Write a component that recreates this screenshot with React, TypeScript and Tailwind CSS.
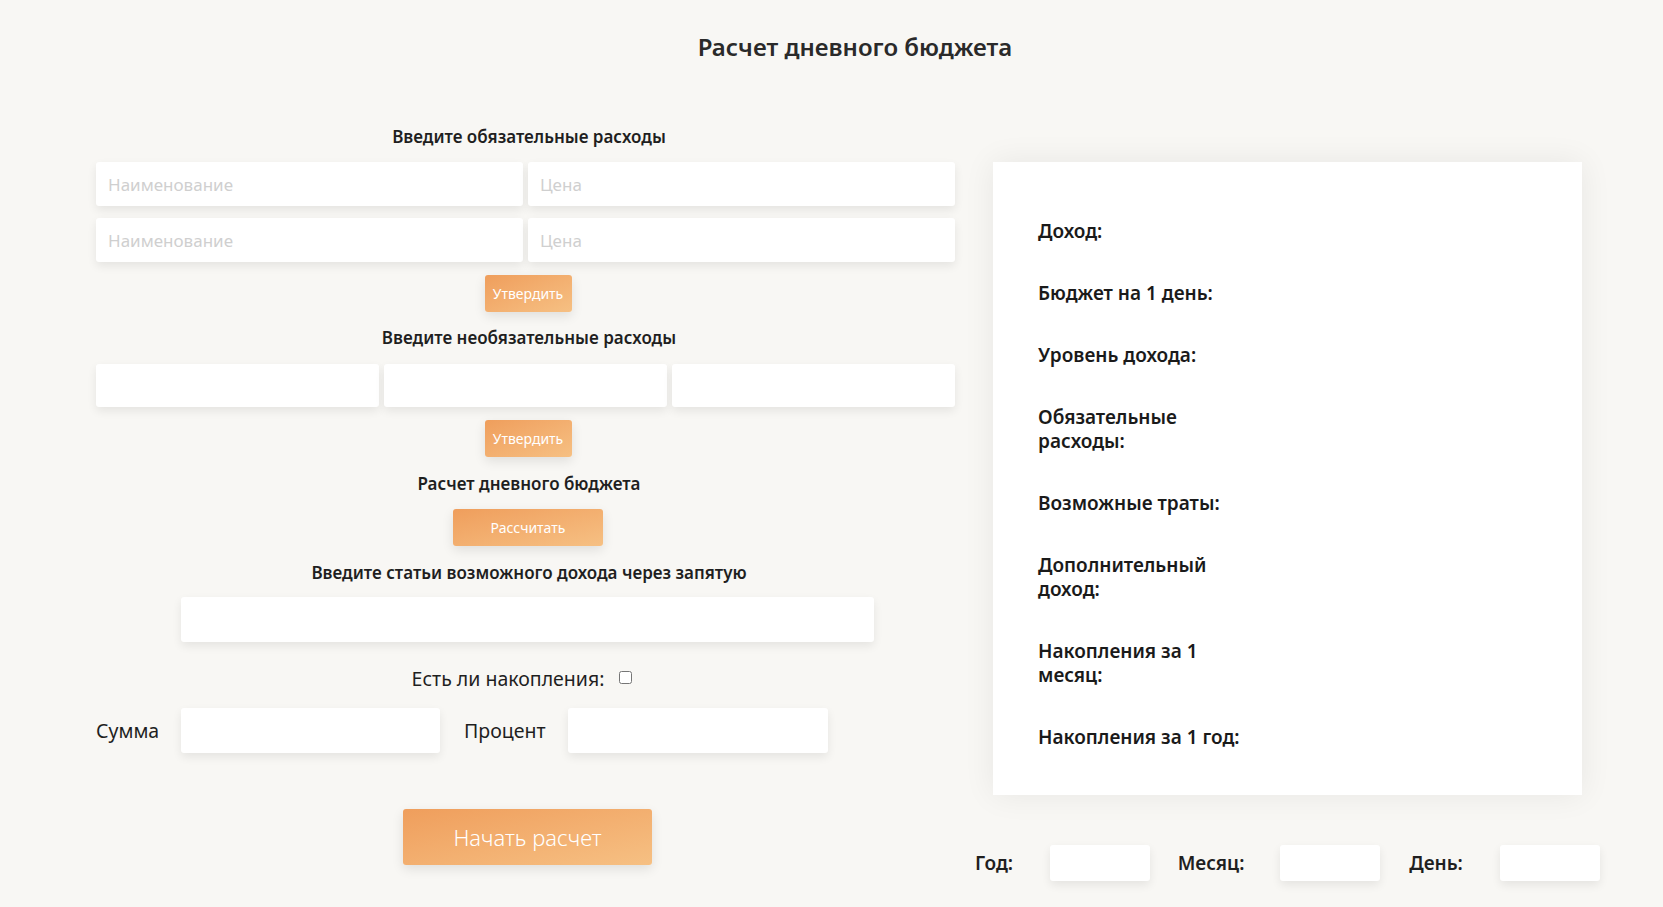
import { useState } from "react";

const font = { fontFamily: '"Noto Sans", "Open Sans", sans-serif' };

const inputCls =
  "bg-white rounded-[3px] shadow-[0_4px_10px_rgba(0,0,0,0.08)] outline-none px-3 text-[17px] text-[#333] placeholder:text-[#cfcfcf]";

const btnCls =
  "rounded-[3px] bg-gradient-to-br from-[#ef9e5c] to-[#f6c083] text-white shadow-[0_4px_12px_rgba(0,0,0,0.1)]";

const summary = [
  ["Доход:"],
  ["Бюджет на 1 день:"],
  ["Уровень дохода:"],
  ["Обязательные", "расходы:"],
  ["Возможные траты:"],
  ["Дополнительный", "доход:"],
  ["Накопления за 1", "месяц:"],
  ["Накопления за 1 год:"],
];

function SectionLabel({ text, className = "" }: { text: string; className?: string }) {
  return (
    <p className={`pl-[7px] text-center text-[17px] leading-6 font-semibold text-[#1f1f1f] ${className}`}>
      {text}
    </p>
  );
}

export default function App() {
  const [saved, setSaved] = useState(false);

  return (
    <div style={font} className="min-h-screen bg-[#f8f7f4] pl-[96px] pr-[63px] pt-[31px] text-[#1f1f1f]">
      <div className="flex justify-center">
        <h1 className="ml-[14px] text-[24px] leading-8 font-semibold text-[#2a2a2a]">
          Расчет дневного бюджета
        </h1>
      </div>

      <div className="mt-[62px] flex gap-[38px] items-start">
        {/* left column: form */}
        <div className="w-[859px] flex flex-col">
          <SectionLabel text="Введите обязательные расходы" />
          <div className="mt-[13px] flex flex-col gap-[12px]">
            {[0, 1].map((i) => (
              <div key={i} className="flex gap-[5px]">
                <input className={`${inputCls} h-[44px] w-[427px]`} placeholder="Наименование" />
                <input className={`${inputCls} h-[44px] flex-1`} placeholder="Цена" />
              </div>
            ))}
          </div>
          <button className={`${btnCls} mt-[13px] self-center ml-[5px] h-[37px] w-[87px] text-[14px]`}>
            Утвердить
          </button>

          <SectionLabel text="Введите необязательные расходы" className="mt-[14px]" />
          <div className="mt-[14px] flex gap-[5px]">
            <input className={`${inputCls} h-[43px] flex-1`} />
            <input className={`${inputCls} h-[43px] flex-1`} />
            <input className={`${inputCls} h-[43px] flex-1`} />
          </div>
          <button className={`${btnCls} mt-[13px] self-center ml-[5px] h-[37px] w-[87px] text-[14px]`}>
            Утвердить
          </button>

          <SectionLabel text="Расчет дневного бюджета" className="mt-[15px]" />
          <button className={`${btnCls} mt-[13px] self-center ml-[5px] h-[37px] w-[150px] text-[14px]`}>
            Рассчитать
          </button>

          <SectionLabel text="Введите статьи возможного дохода через запятую" className="mt-[15px]" />
          <input className={`${inputCls} mt-[12px] self-center ml-[4px] h-[45px] w-[693px]`} />

          <div className="mt-[25px] mr-[7px] flex h-6 items-center justify-center">
            <span className="text-[19.5px] text-[#1f1f1f]">Есть ли накопления:</span>
            <input
              type="checkbox"
              checked={saved}
              onChange={(e) => setSaved(e.target.checked)}
              className="ml-[15px] h-[13px] w-[13px] -mt-[3px]"
            />
          </div>

          <div className="mt-[17px] flex items-center">
            <span className="w-[85px] text-[19.5px]">Сумма</span>
            <input className={`${inputCls} h-[45px] w-[259px]`} />
            <span className="ml-[24px] w-[104px] text-[19.5px]">Процент</span>
            <input className={`${inputCls} h-[45px] w-[260px]`} />
          </div>

          <button className={`${btnCls} mt-[56px] self-center ml-[4px] h-[56px] w-[249px] text-[22px] font-light`}>
            Начать расчет
          </button>
        </div>

        {/* right column: summary */}
        <div className="mt-[37px] w-[607px] flex flex-col">
          <div className="w-[589px] h-[633px] bg-white shadow-[0_0_30px_rgba(0,0,0,0.07)] pl-[45px] pt-[57px] flex flex-col gap-[38px]">
            {summary.map((lines) => (
              <p key={lines.join(" ")} className="text-[19px] leading-6 font-semibold text-[#1a1a1a]">
                {lines.map((l, i) => (
                  <span key={l}>
                    {i > 0 && <br />}
                    {l}
                  </span>
                ))}
              </p>
            ))}
          </div>

          <div className="mt-[50px] -ml-[18px] flex items-center">
            <span className="w-[75px] text-[19px] font-semibold">Год:</span>
            <input className={`${inputCls} h-[36px] w-[100px]`} />
            <span className="ml-[28px] w-[103px] text-[19px] font-semibold">Месяц:</span>
            <input className={`${inputCls} h-[36px] w-[100px]`} />
            <span className="ml-[29px] w-[91px] text-[19px] font-semibold">День:</span>
            <input className={`${inputCls} h-[36px] w-[100px]`} />
          </div>
        </div>
      </div>
    </div>
  );
}
